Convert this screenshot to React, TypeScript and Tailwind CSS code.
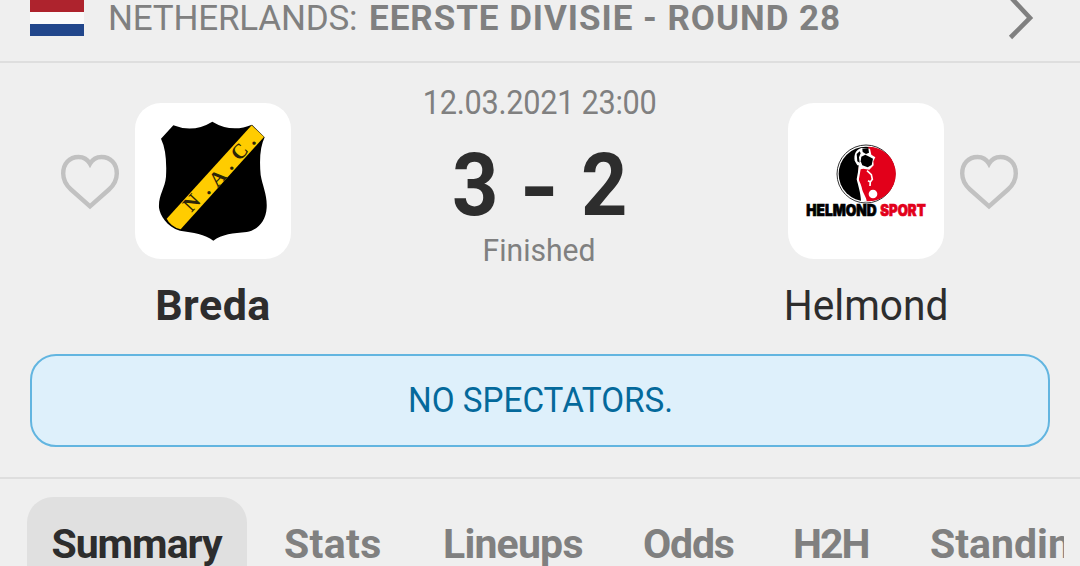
import type { ReactNode } from "react";

const TABS = [
  { label: "Stats", className: "w-[159px] tracking-[0.3px]" },
  { label: "Lineups", className: "w-[200px] tracking-[-0.8px]" },
  { label: "Odds", className: "w-[150px] tracking-[-1.2px]" },
  { label: "H2H", className: "w-[137px] tracking-[-2px]" },
  { label: "Standings", className: "w-[134px] overflow-hidden" },
];

function Flag() {
  return (
    <div className="flex h-9 w-[54px] flex-col">
      <div className="flex-1 bg-[#ae232d]" />
      <div className="flex-1 bg-[#fafafa]" />
      <div className="flex-1 bg-[#21468b]" />
    </div>
  );
}

function Heart() {
  return (
    <svg className="mt-[51px] h-[58px] w-[60px] shrink-0" viewBox="0 0 60 58" fill="none">
      <path
        d="M30 52.300 L11 35.500 C6 31 3.200 26 3.200 19.500 C3.200 9.500 9.500 3 18.500 3 C23.500 3 27.500 5.300 30 9.800 C32.500 5.300 36.500 3 41.500 3 C50.500 3 56.800 9.500 56.800 19.500 C56.800 26 54 31 49 35.500 Z"
        stroke="#c1c1c1"
        strokeWidth="4.4"
      />
    </svg>
  );
}

function NacLogo() {
  return (
    <svg className="h-[130px] w-[125px]" viewBox="0 0 375 390">
      <path d="M70 31 Q130 55 187 20 Q245 55 306 29 L344 67 Q325 105 332 180 C338 215 352 240 350 278 C348 320 320 347 290 351 C250 354 215 358 190 377 C165 358 130 352 90 347 C50 335 30 300 27 278 C25 240 45 220 48 185 Q52 110 33 71 Z" />
      <path d="M305 31 L342 66 L92 343 Q62 335 50 311 Z" fill="#fc0" />
      <g
        fill="#2b2408"
        fontFamily="'Liberation Serif', serif"
        fontWeight="700"
        fontSize="62"
        textAnchor="middle"
      >
        <text transform="translate(140 277) rotate(-47)">N</text>
        <text transform="translate(180 236) rotate(-47)">.</text>
        <text transform="translate(218 203) rotate(-47)">A</text>
        <text transform="translate(248 162) rotate(-47)">.</text>
        <text transform="translate(283 124) rotate(-47)">C</text>
        <text transform="translate(315 87) rotate(-47)">.</text>
      </g>
    </svg>
  );
}

function HelmondLogo() {
  return (
    <svg className="h-[95px] w-[130px]" viewBox="0 0 390 285">
      <circle cx="198" cy="132" r="87" fill="#fff" stroke="#333" strokeWidth="3" />
      <circle cx="198" cy="132" r="82" />
      <path d="M205 50 A82 82 0 0 1 206 214 L192 212 L180 170 L173 150 L176 112 L205 105 Z" fill="#e2001a" />
      {/* player outline */}
      <path
        d="M184 54 C168 58 161 74 164 92 L172 106 L176 106 L174 126 L170 148 C174 164 182 190 183 213 L200 214 C200 202 188 190 185 172 C183 160 176 154 177 146 L182 118 L190 116 L208 119 L221 106 L220 94 L226 82 L214 74 L210 56 Z"
        fill="#fff"
      />
      <path d="M170 72 L179 64 L182 70 L177 82 L179 98 L172 94 Z" />
      <path d="M187 56 L205 55 L207 68 L198 72 L188 66 Z" />
      <path d="M184 80 L196 74 L208 80 L219 86 L215 105 L203 112 L187 106 L182 94 Z" />
      <path
        d="M201 122 L214 134 L217 148 L211 156 L204 152 M211 154 L210 168"
        fill="none"
        stroke="#fff"
        strokeWidth="5"
      />
      <circle cx="219" cy="192" r="13" fill="#fff" />
      <g fontFamily="Inter, sans-serif" fontWeight="900" fontSize="46" strokeWidth="2">
        <text x="19" y="257" textLength="211" lengthAdjust="spacingAndGlyphs" stroke="#000">
          HELMOND
        </text>
        <text x="241" y="257" textLength="136" lengthAdjust="spacingAndGlyphs" fill="#e2001a" stroke="#e2001a">
          SPORT
        </text>
      </g>
    </svg>
  );
}

function Team({ logo, children }: { logo: ReactNode; children: ReactNode }) {
  return (
    <div className="flex w-[156px] shrink-0 flex-col items-center">
      <div className="h-[156px] w-[156px] rounded-[26px] bg-white">{logo}</div>
      <div className="mt-5 text-[43px] leading-[52px] whitespace-nowrap text-[#2d2d2d]">{children}</div>
    </div>
  );
}

export default function App() {
  return (
    <div className="h-[566px] w-[1080px] overflow-hidden bg-[#efefef] font-['Roboto',sans-serif] text-[#808080]">
      <header className="flex h-[63px] items-start border-b-2 border-[#dedede] px-[30px]">
        <Flag />
        <p className="ml-[24px] flex text-[35px] leading-[38px] whitespace-nowrap">
          <span className="w-[261px] tracking-[-0.2px]">NETHERLANDS:</span>
          <span className="font-bold tracking-[0.96px]">EERSTE DIVISIE - ROUND 28</span>
        </p>
        <svg className="mr-[15px] ml-auto h-10 w-7" viewBox="0 0 28 40" fill="none">
          <path d="M3.500 -3 L23 18 L3.500 37.500" stroke="#808080" strokeWidth="4.6" />
        </svg>
      </header>

      <main className="h-[416px] border-b-2 border-[#dedede] px-[30px]">
        <div className="flex h-[291px] justify-between pt-10 pr-[31px] pl-[30px]">
          <div className="flex gap-[15px]">
            <Heart />
            <Team logo={<div className="pt-3 pl-[15px]"><NacLogo /></div>}>
              <span className="font-bold tracking-[0.5px]">Breda</span>
            </Team>
          </div>
          <div className="-mt-5 flex flex-col items-center whitespace-nowrap">
            <p className="scale-x-[0.93] text-[33px] leading-10 tracking-[-0.3px]">12.03.2021 23:00</p>
            <p className="mt-5 flex h-[84px] text-[88px] leading-[84px] font-bold text-[#2d2d2d]">
              <span className="origin-left scale-x-[0.92]">3</span>
              <span className="mx-[20px] translate-y-[3px] scale-x-[1.15]">-</span>
              <span className="origin-right scale-x-[0.92]">2</span>
            </p>
            <p className="mt-[3px] scale-x-[0.94] text-[32px] leading-10">Finished</p>
          </div>
          <div className="flex gap-[15px]">
            <Team logo={<div className="pt-[27px] pl-3"><HelmondLogo /></div>}>
              <p className="scale-x-[0.945]">Helmond</p>
            </Team>
            <Heart />
          </div>
        </div>
        <div className="flex h-[93px] items-center justify-center rounded-[26px] border-2 border-[#62b5e0] bg-[#def0fb] pt-[2px] text-[35px] text-[#04699b]">
          <span className="scale-x-[0.95]">NO SPECTATORS.</span>
        </div>
      </main>

      <nav className="flex pt-[18px] pl-[27px] text-[41px] leading-[94px] font-bold whitespace-nowrap">
        <div className="mr-[37px] h-[94px] w-[220px] rounded-t-[26px] bg-[#e0e0e0] pr-px text-center tracking-[-1px] text-[#2d2d2d]">
          Summary
        </div>
        {TABS.map((tab) => (
          <div key={tab.label} className={`${tab.className} shrink-0`}>
            {tab.label}
          </div>
        ))}
      </nav>
    </div>
  );
}
